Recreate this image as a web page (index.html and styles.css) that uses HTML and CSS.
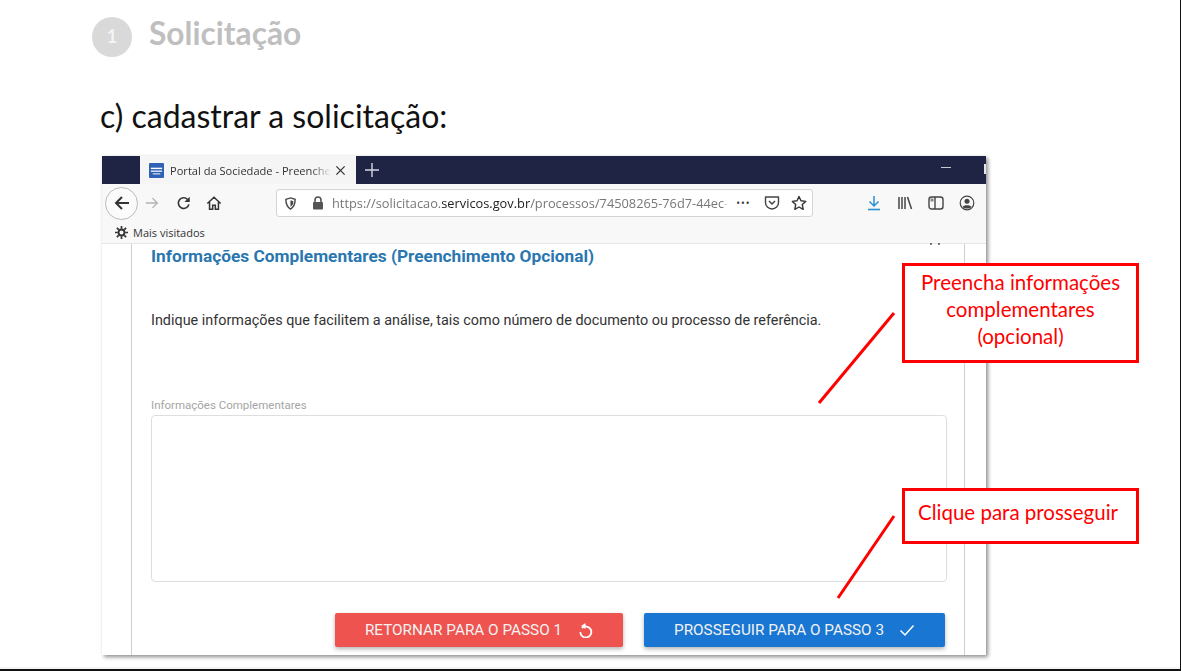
FILE: index.html
```html
<!DOCTYPE html>
<html lang="pt-BR">
<head>
  <meta charset="UTF-8">
  <title>Solicitação</title>
  <link rel="stylesheet" href="styles.css">
</head>
<body>
  <div class="slide">
    <div class="step">
      <span class="step-num">1</span>
      <span class="step-title">Solicitação</span>
    </div>
    <h1 class="slide-title">c) cadastrar a solicitação:</h1>

    <div class="browser">
      <div class="tabbar">
        <div class="tab">
          <svg class="favicon" viewBox="0 0 16 16"><rect width="16" height="16" rx="1" fill="#2f62b5"/><rect x="2" y="5" width="12" height="1.5" fill="#fff"/><rect x="2" y="8" width="12" height="1.5" fill="#dfe7f5"/><rect x="4" y="11" width="8" height="1.2" fill="#dfe7f5"/></svg>
          <span class="tab-title">Portal da Sociedade - Preenche</span>
          <svg class="tab-close" viewBox="0 0 12 12"><path d="M1.5 1.5l9 9M10.5 1.5l-9 9" stroke="#333" stroke-width="1.4" fill="none"/></svg>
        </div>
        <svg class="tab-new" viewBox="0 0 14 14"><path d="M7 0v14M0 7h14" stroke="#d5d7e0" stroke-width="1.4" fill="none"/></svg>
        <span class="win-min"></span>
        <span class="win-max"></span>
      </div>

      <div class="toolbar">
        <span class="back">
          <svg viewBox="0 0 18 18" width="18" height="18"><path d="M16 9H3M9 3L3 9l6 6" stroke="#333" stroke-width="2" fill="none"/></svg>
        </span>
        <svg class="tool forward" viewBox="0 0 18 18"><path d="M2 9h13M9.500 3.500L15 9l-5.500 5.500" stroke="#b3b3b3" stroke-width="1.500" fill="none"/></svg>
        <svg class="tool reload" viewBox="0 0 18 18"><path d="M14.500 10.500A6 6 0 1 1 13 5" stroke="#333" stroke-width="1.800" fill="none"/><path d="M15.500 2v6h-6z" fill="#333"/></svg>
        <svg class="tool home" viewBox="0 0 18 18"><path d="M1.500 9.500L9 2.500l7.500 7M4 8v8h3.500v-4.500h3V16H14V8" stroke="#333" stroke-width="1.700" fill="none"/></svg>
        <div class="urlbar">
          <svg class="shield" viewBox="0 0 14 14"><path d="M2 2.500L7 1l5 1.500c0 5-1.500 8.500-5 10.500-3.500-2-5-5.500-5-10.500z" stroke="#444" stroke-width="1.500" fill="none"/><path d="M7 3.500l3 1c0 3-1 4.800-3 6z" fill="#444"/></svg>
          <span class="url-sep"></span>
          <svg class="lock" viewBox="0 0 12 14"><path d="M3 6V4a3 3 0 0 1 6 0v2" stroke="#555" stroke-width="1.600" fill="none"/><rect x="1" y="6" width="10" height="7.500" rx="1" fill="#555"/></svg>
          <span class="url">https://solicitacao.<b>servicos.gov.br</b>/processos/74508265-76d7-44ec-</span>
          <span class="url-dots">•••</span>
          <svg class="url-icon pocket" viewBox="0 0 16 16"><path d="M1.500 2h13v5.500a6.500 6.500 0 0 1-13 0z" stroke="#444" stroke-width="1.400" fill="none" stroke-linejoin="round"/><path d="M5 6l3 3 3-3" stroke="#444" stroke-width="1.500" fill="none"/></svg>
          <svg class="url-icon" viewBox="0 0 16 16"><path d="M8 1.500l2 4.300 4.700.6-3.400 3.200.9 4.700L8 12l-4.200 2.300.9-4.700L1.300 6.400 6 5.800z" stroke="#333" stroke-width="1.400" fill="none" stroke-linejoin="round"/></svg>
        </div>
        <div class="tool-right">
          <svg class="tool" viewBox="0 0 16 16"><path d="M8 1v10M3.500 6.500L8 11l4.500-4.500" stroke="#2a90d0" stroke-width="1.500" fill="none"/><path d="M2 14.500h12" stroke="#2a90d0" stroke-width="1.600"/></svg>
          <svg class="tool" viewBox="0 0 16 16"><path d="M2 2v12M5 2v12M8 2v12M10.500 2l4 12" stroke="#444" stroke-width="1.500" fill="none"/></svg>
          <svg class="tool" viewBox="0 0 16 16"><rect x="1" y="2" width="14" height="12" rx="2.500" stroke="#444" stroke-width="1.400" fill="none"/><path d="M7 2v12" stroke="#444" stroke-width="1.400"/><rect x="2.500" y="3.500" width="3" height="3" fill="#888"/></svg>
          <svg class="tool" viewBox="0 0 16 16"><circle cx="8" cy="8" r="6.800" stroke="#444" stroke-width="1.200" fill="none"/><circle cx="8" cy="6.200" r="2.500" fill="#444"/><path d="M3.500 12c1-2.500 8-2.500 9 0-2 2-7 2-9 0z" fill="#444"/></svg>
        </div>
      </div>

      <div class="bookmarks">
        <svg class="gear" viewBox="0 0 14 14"><circle cx="7" cy="7" r="3.200" stroke="#333" stroke-width="2" fill="none"/><path d="M7 0v3M7 11v3M0 7h3M11 7h3M2 2l2 2M10 10l2 2M12 2l-2 2M4 10l-2 2" stroke="#333" stroke-width="1.800"/></svg>
        <span>Mais visitados</span>
      </div>

      <div class="content">
        <div class="panel">
          <span class="collapse-dots"></span>
          <h2 class="panel-title">Informações Complementares (Preenchimento Opcional)</h2>
          <p class="panel-text">Indique informações que facilitem a análise, tais como número de documento ou processo de referência.</p>
          <label class="field-label">Informações Complementares</label>
          <div class="textarea"></div>
          <div class="actions">
            <button class="btn btn-back">RETORNAR PARA O PASSO 1
              <svg viewBox="0 0 16 16" width="16" height="16"><path d="M4.500 5.500A5.500 5.500 0 1 1 2.800 9.500" stroke="#fff" stroke-width="1.800" fill="none" transform="translate(.5 .5)"/><path d="M8.500 1v6L4 4z" fill="#fff"/></svg>
            </button>
            <button class="btn btn-next">PROSSEGUIR PARA O PASSO 3
              <svg viewBox="0 0 16 16" width="16" height="16"><path d="M1.500 8.500l4.500 4.500 8.500-9.500" stroke="#fff" stroke-width="1.500" fill="none"/></svg>
            </button>
          </div>
        </div>
      </div>
    </div>

    <svg class="pointers" viewBox="0 0 1181 671">
      <path d="M894 313L819 403" stroke="#f00" stroke-width="3"/>
      <path d="M894 516L838 598" stroke="#f00" stroke-width="3"/>
    </svg>
    <div class="callout callout-fill">Preencha informações complementares (opcional)</div>
    <div class="callout callout-next">Clique para prosseguir</div>
  </div>
</body>
</html>
```

FILE: styles.css
```css
* {
  box-sizing: border-box;
}

body {
  margin: 0;
  background: #fff;
  font-family: "Lato", "Liberation Sans", sans-serif;
}

.slide {
  position: relative;
  width: 1181px;
  height: 671px;
  overflow: hidden;
  background: #fff;
  border-right: 1px solid #111;
  border-bottom: 2px solid #111;
  box-shadow: inset 0 -2px 0 #f4f4f4;
  padding: 15px 0 0 92px;
}

.step {
  display: flex;
  align-items: center;
  gap: 17px;
  height: 43px;
}

.step-num {
  width: 40px;
  height: 40px;
  border-radius: 50%;
  background: #d9d9d9;
  color: #f4f4f4;
  font-size: 18px;
  font-weight: 700;
  padding-bottom: 2px;
  display: flex;
  align-items: center;
  justify-content: center;
}

.step-title {
  color: #bfbfbf;
  font-size: 31.700px;
  font-weight: 700;
  padding-bottom: 8px;
}

.slide-title {
  margin: 39px 0 0 8px;
  font-size: 32px;
  line-height: 38px;
  font-weight: 400;
  color: #111;
}

.browser {
  width: 884px;
  height: 499px;
  margin: 21px 0 0 10px;
  background: #fff;
  box-shadow: 2px 2px 4px rgba(0, 0, 0, 0.45);
  overflow: hidden;
}

.tabbar {
  display: flex;
  align-items: center;
  height: 28px;
  padding-left: 38px;
  background: #1f2344;
}

.tab {
  display: flex;
  align-items: center;
  width: 216px;
  height: 28px;
  padding: 0 10px 0 9px;
  background: #f5f5f6;
  font-family: "Open Sans", sans-serif;
  font-size: 11.100px;
  color: #333;
}

.favicon {
  width: 15px;
  height: 15px;
  flex: none;
}

.tab-title {
  margin-left: 6px;
  white-space: nowrap;
  -webkit-mask-image: linear-gradient(to right, #000 88%, transparent);
  mask-image: linear-gradient(to right, #000 88%, transparent);
}

.tab-close {
  width: 11px;
  height: 11px;
  margin-left: auto;
  flex: none;
}

.tab-new {
  width: 14px;
  height: 14px;
  margin-left: 9px;
}

.win-min {
  width: 10px;
  height: 1px;
  margin: 0 33px 6px auto;
  background: #c8cad4;
}

.win-max {
  width: 2px;
  height: 10px;
  margin-bottom: 2px;
  background: #e4e4ea;
}

.toolbar {
  display: flex;
  align-items: center;
  height: 38px;
  padding-left: 3px;
  background: #f8f8f8;
}

.back {
  display: flex;
  align-items: center;
  justify-content: center;
  flex: none;
  width: 33px;
  height: 33px;
  border: 1px solid #bbb;
  border-radius: 50%;
  background: #fbfbfb;
}

.tool {
  width: 16px;
  height: 16px;
  flex: none;
}

.forward {
  margin-left: 6px;
}

.reload {
  margin-left: 16px;
}

.home {
  margin-left: 14px;
}

.urlbar {
  display: flex;
  align-items: center;
  flex: none;
  width: 537px;
  height: 28px;
  margin-left: 54px;
  padding: 0 6px 0 7px;
  background: #fff;
  border: 1px solid #d4d4d4;
  border-radius: 3px;
  font-family: "Open Sans", sans-serif;
  font-size: 12.800px;
  color: #777;
}

.shield {
  width: 13px;
  height: 13px;
  flex: none;
}

.url-sep {
  width: 1px;
  height: 18px;
  margin: 0 7px 0 8px;
  background: #ddd;
}

.lock {
  width: 12px;
  height: 14px;
  flex: none;
}

.url {
  margin-left: 8px;
  white-space: nowrap;
  -webkit-mask-image: linear-gradient(to right, #000 98.500%, transparent);
  mask-image: linear-gradient(to right, #000 98.500%, transparent);
}

.url b {
  font-weight: 400;
  color: #222;
}

.url-dots {
  margin-left: 8px;
  font-size: 10px;
  letter-spacing: 1px;
  color: #333;
}

.url-icon {
  width: 16px;
  height: 16px;
  margin-left: 11px;
  flex: none;
}

.pocket {
  margin-left: 13px;
}

.tool-right {
  display: flex;
  gap: 15px;
  margin-left: 53px;
}

.bookmarks {
  display: flex;
  align-items: center;
  gap: 5px;
  height: 22px;
  padding-left: 13px;
  background: #f8f8f8;
  border-bottom: 1px solid #e6e6e6;
  font-family: "Open Sans", sans-serif;
  font-size: 11px;
  color: #333;
}

.gear {
  width: 13px;
  height: 13px;
}

.content {
  height: 411px;
  padding-left: 29px;
}

.panel {
  position: relative;
  width: 834px;
  height: 100%;
  padding: 0 18px 0 19px;
  border-left: 1px solid #cfcfcf;
  border-right: 1px solid #cfcfcf;
}

.collapse-dots {
  position: absolute;
  left: 798px;
  top: -1px;
  width: 2px;
  height: 2px;
  background: #777;
  box-shadow: 8px 0 0 #777;
}

.panel-title {
  margin: 0;
  padding-top: 1px;
  font-family: "Roboto", sans-serif;
  font-size: 17.300px;
  line-height: 22px;
  font-weight: 700;
  color: #2a77b0;
}

.panel-text {
  margin: 44px 0 0;
  font-family: "Roboto", sans-serif;
  font-size: 14.400px;
  line-height: 20px;
  color: #333;
}

.field-label {
  display: block;
  margin-top: 67px;
  font-family: "Roboto", sans-serif;
  font-size: 11.500px;
  line-height: 14px;
  color: #a5a5a5;
}

.textarea {
  width: 796px;
  height: 167px;
  margin-top: 3px;
  border: 1px solid #dedede;
  border-radius: 4px;
}

.actions {
  display: flex;
  justify-content: flex-end;
  gap: 21px;
  margin-top: 31px;
  padding-right: 1px;
}

.btn {
  display: flex;
  align-items: center;
  justify-content: center;
  gap: 15px;
  height: 34px;
  border: none;
  border-radius: 2px;
  font-family: "Roboto", sans-serif;
  font-size: 15.300px;
  color: #f2f2f2;
  box-shadow: 0 2px 4px rgba(0, 0, 0, 0.3);
}

.btn-back {
  width: 288px;
  background: #ef5350;
}

.btn-next {
  width: 301px;
  background: #1976d2;
}

.pointers {
  position: absolute;
  left: 0;
  top: 0;
  width: 1181px;
  height: 671px;
}

.callout {
  position: absolute;
  left: 902px;
  width: 237px;
  border: 3px solid #f00;
  background: #fff;
  color: #f00;
  font-size: 20.500px;
  line-height: 27px;
  text-align: center;
}

.callout-fill {
  top: 263px;
  height: 100px;
  padding: 3px 12px 0;
}

.callout-next {
  top: 488px;
  height: 56px;
  padding: 8px 5px 0 0;
}
```
